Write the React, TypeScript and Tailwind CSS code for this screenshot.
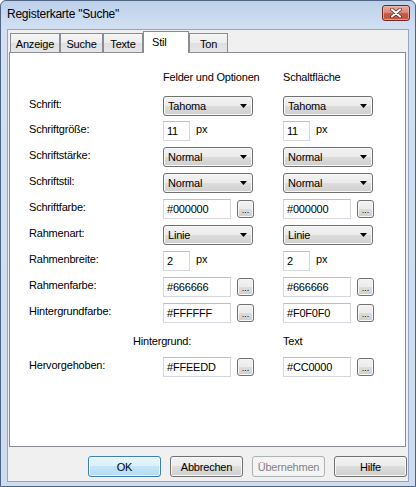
import React from "react";

const GRAD_BTN =
  "bg-[linear-gradient(to_bottom,#f2f2f2_0%,#ebebeb_50%,#dddddd_50%,#cfcfcf_100%)]";

function Dropdown({ value }: { value: string }) {
  return (
    <div
      className={`w-[90px] h-[20px] rounded-[3px] border border-[#707070] ${GRAD_BTN} shadow-[inset_0_0_0_1px_#f8f8f8] flex items-center justify-between pl-[4px] pr-[5px]`}
    >
      <span className="leading-[14px] text-black">{value}</span>
      <svg width="7" height="4" viewBox="0 0 7 4">
        <path d="M0 0H7L3.5 4Z" fill="#000" />
      </svg>
    </div>
  );
}

function TextBox({ value, w }: { value: string; w: string }) {
  return (
    <div
      className={`${w} h-[20px] bg-white border border-[#d4d8de] border-t-[#bcc0c6] flex items-center pl-[3px] leading-[14px] text-black`}
    >
      {value}
    </div>
  );
}

function DotsButton() {
  return (
    <div
      className={`ml-[6px] mt-[1px] w-[17px] h-[18px] rounded-[3px] border border-[#707070] ${GRAD_BTN} shadow-[inset_0_0_0_1px_#f8f8f8] flex items-end justify-center pb-[4px]`}
    >
      <span className="text-[9px] leading-[6px] tracking-[0px] text-black">...</span>
    </div>
  );
}

function Label({ children }: { children: React.ReactNode }) {
  return <div className="w-[134px] leading-[14px] pt-[1px] text-black">{children}</div>;
}

function Cell({ children }: { children: React.ReactNode }) {
  return <div className="w-[120px] flex items-start">{children}</div>;
}

function SizeField({ value }: { value: string }) {
  return (
    <>
      <TextBox value={value} w="w-[27px]" />
      <span className="ml-[6px] leading-[14px] pt-[1px]">px</span>
    </>
  );
}

function ColorField({ value }: { value: string }) {
  return (
    <>
      <TextBox value={value} w="w-[68px]" />
      <DotsButton />
    </>
  );
}

function Row({
  label,
  a,
  b,
  className = "",
}: {
  label: string;
  a: React.ReactNode;
  b: React.ReactNode;
  className?: string;
}) {
  return (
    <div className={`flex h-[20px] ${className}`}>
      <Label>{label}</Label>
      <Cell>{a}</Cell>
      <div className="flex items-start">{b}</div>
    </div>
  );
}

function Tab({
  label,
  w,
  selected = false,
}: {
  label: string;
  w: string;
  selected?: boolean;
}) {
  if (selected) {
    return (
      <div
        className={`${w} h-[22px] bg-white border border-b-0 border-[#898c95] pl-[8px] pt-[3px] leading-[14px] text-black relative z-10`}
      >
        {label}
      </div>
    );
  }
  return (
    <div
      className={`${w} h-[19px] mb-[1px] border border-b-0 border-[#898c95] bg-[linear-gradient(to_bottom,#f6f6f6_0%,#ececec_50%,#dfdfdf_50%,#e6e6e6_100%)] flex justify-center pt-[3px] leading-[14px] text-black`}
    >
      {label}
    </div>
  );
}

function DialogButton({
  label,
  variant = "normal",
}: {
  label: string;
  variant?: "normal" | "default" | "disabled";
}) {
  const base =
    "w-[73px] h-[21px] rounded-[3px] border flex items-center justify-center leading-[14px]";
  if (variant === "default") {
    return (
      <div
        className={`${base} border-[#3c7fb1] bg-[linear-gradient(to_bottom,#e8f5fc_0%,#dcf0fb_50%,#c4e5f8_50%,#b5dcf3_100%)] shadow-[inset_0_0_0_1px_#ffffffaa] text-black`}
      >
        {label}
      </div>
    );
  }
  if (variant === "disabled") {
    return (
      <div className={`${base} border-[#adb2b5] bg-[#f4f4f4] text-[#838383]`}>{label}</div>
    );
  }
  return (
    <div
      className={`${base} border-[#707070] ${GRAD_BTN} shadow-[inset_0_0_0_1px_#f8f8f8] text-black`}
    >
      {label}
    </div>
  );
}

function CloseButton() {
  return (
    <div className="mt-[4px] w-[28px] h-[16px] rounded-[3px] border border-[#6b2a24] bg-[linear-gradient(to_bottom,#e9aa9f_0%,#dc8a7c_45%,#c75a48_55%,#c9503e_100%)] shadow-[inset_0_0_0_1px_#f0c0b4aa] flex items-center justify-center">
      <svg width="12" height="10" viewBox="0 0 12 10">
        <path
          d="M2 1.5L10 8.5M10 1.5L2 8.5"
          stroke="#5a1f1a"
          strokeWidth="3.6"
          strokeLinecap="round"
        />
        <path
          d="M2 1.5L10 8.5M10 1.5L2 8.5"
          stroke="#ffffff"
          strokeWidth="2.2"
          strokeLinecap="round"
        />
      </svg>
    </div>
  );
}

export default function App() {
  return (
    <div className="w-[416px] h-[487px] font-['Liberation_Sans',Arial,sans-serif] text-[11px] tracking-[-0.2px] text-black">
      <div className="w-[416px] h-[487px] flex flex-col border border-[#4f6482] rounded-t-[6px] bg-[linear-gradient(to_bottom,#bdd0ea_0px,#d3e0f2_28px,#cfdcef_100%)] overflow-hidden">
        {/* Title bar */}
        <div className="h-[28px] flex items-start justify-between pl-[6px] pr-[5px]">
          <div className="mt-[6px] text-[12px] leading-[15px] tracking-[-0.25px] text-black">
            Registerkarte "Suche"
          </div>
          <CloseButton />
        </div>

        {/* Body */}
        <div className="mx-[6px] h-[453px] border border-[#93a7c3] bg-[#f0f0f0] flex flex-col">
          {/* Tabs */}
          <div className="mt-[1px] h-[22px] flex items-end pl-[2px] relative z-10">
            <Tab label="Anzeige" w="w-[50px]" />
            <Tab label="Suche" w="w-[43px]" />
            <Tab label="Texte" w="w-[40px]" />
            <Tab label="Stil" w="w-[46px]" selected />
            <Tab label="Ton" w="w-[39px]" />
          </div>

          {/* Panel */}
          <div className="-mt-[1px] ml-[1px] mr-[2px] h-[395px] border border-[#898c95] bg-white pl-[19px] pt-[17px]">
            <div className="flex h-[14px] leading-[14px]">
              <div className="w-[134px]" />
              <div className="w-[120px]">Felder und Optionen</div>
              <div>Schaltfläche</div>
            </div>

            <Row
              className="mt-[12px]"
              label="Schrift:"
              a={<Dropdown value="Tahoma" />}
              b={<Dropdown value="Tahoma" />}
            />
            <Row
              className="mt-[5px]"
              label="Schriftgröße:"
              a={<SizeField value="11" />}
              b={<SizeField value="11" />}
            />
            <Row
              className="mt-[6px]"
              label="Schriftstärke:"
              a={<Dropdown value="Normal" />}
              b={<Dropdown value="Normal" />}
            />
            <Row
              className="mt-[6px]"
              label="Schriftstil:"
              a={<Dropdown value="Normal" />}
              b={<Dropdown value="Normal" />}
            />
            <Row
              className="mt-[6px]"
              label="Schriftfarbe:"
              a={<ColorField value="#000000" />}
              b={<ColorField value="#000000" />}
            />
            <Row
              className="mt-[6px]"
              label="Rahmenart:"
              a={<Dropdown value="Linie" />}
              b={<Dropdown value="Linie" />}
            />
            <Row
              className="mt-[6px]"
              label="Rahmenbreite:"
              a={<SizeField value="2" />}
              b={<SizeField value="2" />}
            />
            <Row
              className="mt-[6px]"
              label="Rahmenfarbe:"
              a={<ColorField value="#666666" />}
              b={<ColorField value="#666666" />}
            />
            <Row
              className="mt-[6px]"
              label="Hintergrundfarbe:"
              a={<ColorField value="#FFFFFF" />}
              b={<ColorField value="#F0F0F0" />}
            />

            <div className="mt-[11px] flex h-[14px] leading-[14px]">
              <div className="w-[134px] pl-[104px] whitespace-nowrap">Hintergrund:</div>
              <div className="w-[120px]" />
              <div>Text</div>
            </div>

            <Row
              className="mt-[9px]"
              label="Hervorgehoben:"
              a={<ColorField value="#FFEEDD" />}
              b={<ColorField value="#CC0000" />}
            />
          </div>

          {/* Buttons */}
          <div className="mt-[9px] flex justify-end gap-[9px] pr-[1px]">
            <DialogButton label="OK" variant="default" />
            <DialogButton label="Abbrechen" />
            <DialogButton label="Übernehmen" variant="disabled" />
            <DialogButton label="Hilfe" />
          </div>
        </div>
      </div>
    </div>
  );
}
